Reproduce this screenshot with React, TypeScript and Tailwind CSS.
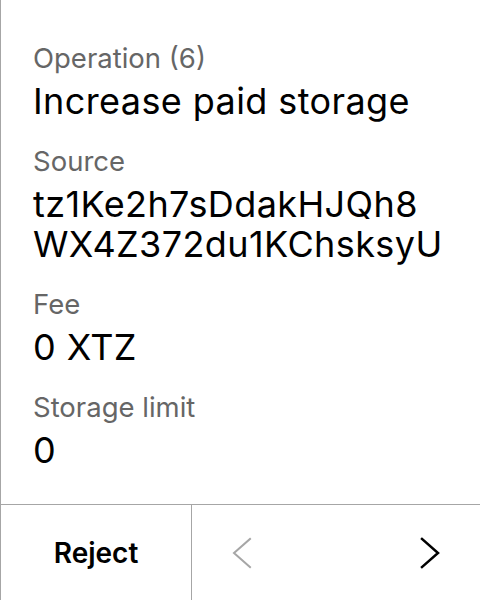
const fields = [
  { label: "Operation (6)", value: ["Increase paid storage"] },
  { label: "Source", value: ["tz1Ke2h7sDdakHJQh8", "WX4Z372du1KChsksyU"] },
  { label: "Fee", value: ["0 XTZ"] },
  { label: "Storage limit", value: ["0"] },
];

function Chevron({ dir, color }: { dir: "left" | "right"; color: string }) {
  const points = dir === "left" ? "18,2 2,16 18,30" : "2,2 18,16 2,30";
  return (
    <svg width="20" height="32" viewBox="0 0 20 32" fill="none">
      <polyline points={points} stroke={color} strokeWidth={dir === "left" ? 2 : 2.5} strokeLinecap="square" />
    </svg>
  );
}

export default function App() {
  return (
    <div
      className="flex h-[600px] w-[480px] flex-col border-l border-[#a6a6a6] bg-white text-black"
      style={{ fontFamily: "Inter, 'Noto Sans', sans-serif" }}
    >
      <div className="flex flex-1 flex-col gap-[23px] pl-[32px] pt-[41px]">
        {fields.map((f) => (
          <div key={f.label} className="flex flex-col">
            <div className="text-[27.5px] leading-[34px] text-[#666666]">{f.label}</div>
            <div className="mt-[6px] text-[36px] leading-[40px] tracking-[0.4px]">
              {f.value.map((line) => (
                <div key={line}>{line}</div>
              ))}
            </div>
          </div>
        ))}
      </div>
      <div className="flex h-[96px] border-t border-[#a6a6a6]">
        <div className="flex w-[191px] items-center justify-center border-r border-[#a6a6a6] text-[28px] font-semibold">
          Reject
        </div>
        <div className="flex flex-1 items-center justify-between pl-[40px] pr-[40px]">
          <Chevron dir="left" color="#a6a6a6" />
          <Chevron dir="right" color="#000000" />
        </div>
      </div>
    </div>
  );
}
